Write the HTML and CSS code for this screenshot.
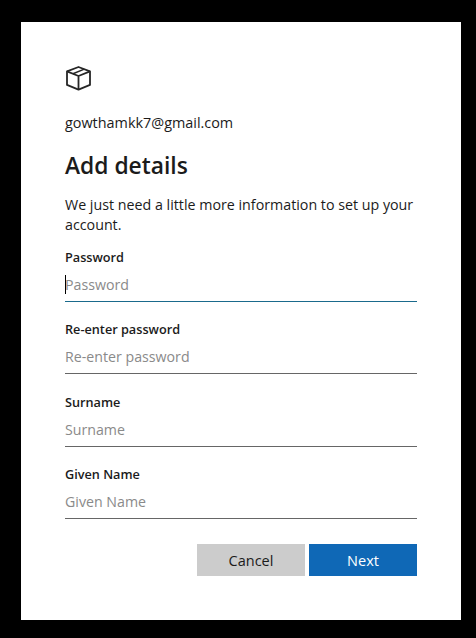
FILE: index.html
```html
<!DOCTYPE html>
<html lang="en">
<head>
<meta charset="utf-8">
<title>Add details</title>
<link rel="stylesheet" href="styles.css">
</head>
<body>
<main class="card">
  <svg class="logo" width="28" height="26" viewBox="0 0 28 26" fill="none" stroke="#262626" stroke-width="1.8" stroke-linejoin="round" aria-hidden="true">
    <path d="M13.5 1 25 5.3v13.6L13.5 23.6 2 18.9V5.3Z"/>
    <path d="M2 5.3 13.5 10 25 5.3M13.5 10v13.6"/>
    <path d="M8 7.7 19.3 3.1" stroke-width="1.5"/>
  </svg>
  <p class="email">gowthamkk7@gmail.com</p>
  <h1 class="title">Add details</h1>
  <p class="intro">We just need a little more information to set up your account.</p>
  <form class="form">
    <div class="field">
      <label class="label" for="pw">Password</label>
      <div class="input-wrap">
        <input class="input input-active" id="pw" type="text" placeholder="Password">
        <span class="caret"></span>
      </div>
    </div>
    <div class="field">
      <label class="label" for="pw2">Re-enter password</label>
      <div class="input-wrap"><input class="input" id="pw2" type="text" placeholder="Re-enter password"></div>
    </div>
    <div class="field">
      <label class="label" for="sn">Surname</label>
      <div class="input-wrap"><input class="input" id="sn" type="text" placeholder="Surname"></div>
    </div>
    <div class="field">
      <label class="label" for="gn">Given Name</label>
      <div class="input-wrap"><input class="input" id="gn" type="text" placeholder="Given Name"></div>
    </div>
    <div class="actions">
      <button class="btn btn-cancel" type="button">Cancel</button>
      <button class="btn btn-next" type="button">Next</button>
    </div>
  </form>
</main>
</body>
</html>
```
FILE: styles.css
```css
* { box-sizing: border-box; }
html, body { margin: 0; height: 100%; background: #000; }
body {
  padding: 22px 15px 18px 21px;
  font-family: "Open Sans", "Liberation Sans", sans-serif;
  color: #1b1b1b;
  overflow: hidden;
}
.card {
  background: #fff;
  height: 598px;
  padding: 44px 44px 0;
  display: flex;
  flex-direction: column;
}
.logo { display: block; }
.email { margin: 21px 0 0; font-size: 14.4px; line-height: 20px; }
.title { margin: 17px 0 0; font-size: 22.8px; line-height: 32px; font-weight: 600; }
.intro { margin: 13px 0 0; font-size: 14.25px; line-height: 20px; }
.form { margin-top: 12px; display: flex; flex-direction: column; }
.field { margin-bottom: 17.33px; }
.label { display: block; font-size: 12.7px; line-height: 20px; font-weight: 600; }
.input-wrap { position: relative; margin-top: 3px; }
.input {
  display: block;
  width: 100%;
  height: 32px;
  padding: 0 0 2px;
  border: 0;
  border-bottom: 1px solid #666;
  outline: 0;
  background: transparent;
  font: inherit;
  font-size: 14.2px;
}
.input::placeholder { color: #8a8a8a; opacity: 1; }
.input-active { border-bottom-color: #1a6a8c; }
.caret { position: absolute; left: 0; top: 5px; width: 1px; height: 19px; background: #000; }
.actions { display: flex; justify-content: flex-end; gap: 4px; margin-top: 8px; }
.btn {
  width: 108px;
  height: 32px;
  border: 0;
  padding: 0;
  font: inherit;
  font-size: 14.5px;
}
.btn-cancel { background: #ccc; color: #1b1b1b; }
.btn-next { background: #0f68b6; color: #fff; }
```
